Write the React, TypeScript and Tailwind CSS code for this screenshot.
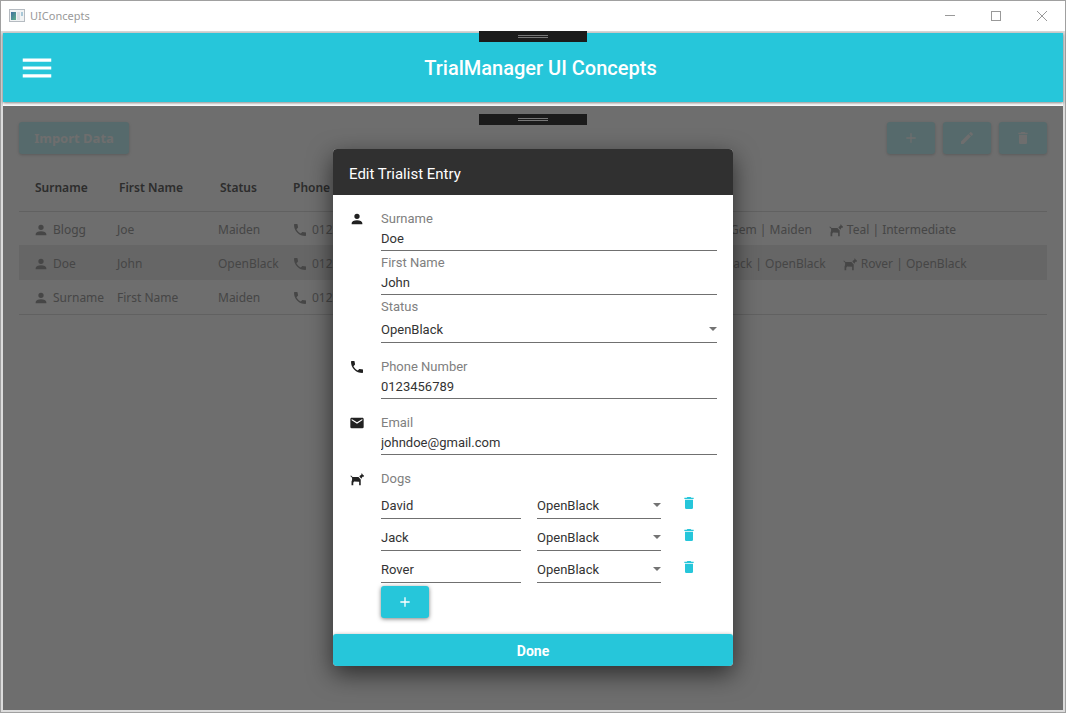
import type { ReactNode } from "react";

const paths = {
  menu: "M3,6H21V8H3V6M3,11H21V13H3V11M3,16H21V18H3V16Z",
  plus: "M19,13H13V19H11V13H5V11H11V5H13V11H19V13Z",
  pencil:
    "M20.71,7.04C21.1,6.65 21.1,6 20.71,5.63L18.37,3.29C18,2.9 17.35,2.9 16.96,3.29L15.12,5.12L18.87,8.87M3,17.25V21H6.75L17.81,9.93L14.06,6.18L3,17.25Z",
  trash:
    "M19,4H15.5L14.5,3H9.5L8.5,4H5V6H19M6,19A2,2 0 0,0 8,21H16A2,2 0 0,0 18,19V7H6V19Z",
  account:
    "M12,4A4,4 0 0,1 16,8A4,4 0 0,1 12,12A4,4 0 0,1 8,8A4,4 0 0,1 12,4M12,14C16.42,14 20,15.79 20,18V20H4V18C4,15.79 7.58,14 12,14Z",
  phone:
    "M6.62,10.79C8.06,13.62 10.38,15.94 13.21,17.38L15.41,15.18C15.69,14.9 16.08,14.82 16.43,14.93C17.55,15.3 18.75,15.5 20,15.5A1,1 0 0,1 21,16.5V20A1,1 0 0,1 20,21A17,17 0 0,1 3,4A1,1 0 0,1 4,3H7.5A1,1 0 0,1 8.5,4C8.5,5.25 8.7,6.45 9.07,7.57C9.18,7.92 9.1,8.31 8.82,8.59L6.62,10.79Z",
  email:
    "M20,8L12,13L4,8V6L12,11L20,6M20,4H4C2.89,4 2,4.89 2,6V18A2,2 0 0,0 4,20H20A2,2 0 0,0 22,18V6C22,4.89 21.1,4 20,4Z",
  dog: "M2,7.4L3,6.6L5.4,9H14.2L17.6,12.6V21.4H15.2V16.2L7.6,15.6L6.4,17.6V21.4H3.8V15.6L4.6,13.6V10.2L2,7.4ZM15.8,7.4L18.4,5.6L19.2,3L20.4,5.4L22.6,7L22,8.8H20.2L18.6,11.6L15.8,8.6Z",
};

function Icon({ name, className }: { name: keyof typeof paths; className: string }) {
  return (
    <svg viewBox="0 0 24 24" className={className} fill="currentColor" aria-hidden="true">
      <path d={paths[name]} />
    </svg>
  );
}

function Grip() {
  return (
    <div className="absolute top-0 left-1/2 flex h-[11px] w-[108px] -translate-x-1/2 flex-col items-center justify-center gap-px bg-[#1b1b1b]">
      <span className="h-px w-[30px] bg-[#777]" />
      <span className="h-px w-[30px] bg-[#777]" />
    </div>
  );
}

function TextField({ id, label, value }: { id: string; label: string; value: string }) {
  return (
    <div>
      <label htmlFor={id} className="block h-4 text-[13px] leading-4 text-[#808080]">
        {label}
      </label>
      <input
        id={id}
        defaultValue={value}
        className="block h-6 w-full border-b border-[#707070] bg-transparent text-[13px] text-[#333] outline-none"
      />
    </div>
  );
}

function StatusSelect({ id, label }: { id: string; label?: string }) {
  return (
    <div className="grid items-center">
      <select
        id={id}
        aria-label={label}
        defaultValue="OpenBlack"
        className="col-start-1 row-start-1 h-7 w-full appearance-none border-b border-[#707070] bg-transparent pt-[2px] text-[13px] text-[#333] outline-none"
      >
        <option>Maiden</option>
        <option>Intermediate</option>
        <option>OpenBlack</option>
      </select>
      <svg
        viewBox="0 0 8 4"
        className="pointer-events-none col-start-1 row-start-1 h-1 w-2 justify-self-end"
        fill="#737373"
        aria-hidden="true"
      >
        <path d="M0,0H8L4,4Z" />
      </svg>
    </div>
  );
}

function Section({ icon, children }: { icon: keyof typeof paths; children: ReactNode }) {
  return (
    <section className="flex gap-4">
      <Icon name={icon} className="size-4 shrink-0 text-[#212121]" />
      <div className="flex min-w-0 flex-1 flex-col gap-1">{children}</div>
    </section>
  );
}

const trialists = [
  { surname: "Blogg", first: "Joe", status: "Maiden", dogs: ["Gem | Maiden", "Teal | Intermediate"] },
  { surname: "Doe", first: "John", status: "OpenBlack", dogs: ["Jack | OpenBlack", "Rover | OpenBlack"] },
  { surname: "Surname", first: "First Name", status: "Maiden", dogs: [] },
];

const toolButton =
  "flex h-8 w-12 items-center justify-center rounded-[3px] bg-[#c3f1f5] text-[#fafafa] shadow-[0_1px_3px_rgba(0,0,0,0.18)]";

export default function App() {
  return (
    <div className="flex h-screen min-h-[640px] flex-col border border-[#a0a0a0] bg-white font-['Roboto',sans-serif]">
      <div className="flex h-[30px] shrink-0 items-center bg-white text-[#999]">
        <svg viewBox="0 0 16 14" className="ml-2 h-[14px] w-4" aria-hidden="true">
          <defs>
            <linearGradient id="pane" x1="0" y1="0" x2="1" y2="1">
              <stop offset="0" stopColor="#3f6f9f" />
              <stop offset="1" stopColor="#5fb08a" />
            </linearGradient>
          </defs>
          <rect x="0.5" y="0.5" width="15" height="12" fill="#f1f3f4" stroke="#b5bbc1" />
          <rect x="2" y="3" width="5" height="8" fill="url(#pane)" />
          <rect x="8" y="3" width="3" height="8" fill="#dde0e4" />
          <rect x="12" y="3" width="2" height="4" fill="#a9c8d8" />
        </svg>
        <span className="ml-[5px] flex-1 font-['Noto_Sans',sans-serif] text-[11px]">UIConcepts</span>
        <button aria-label="Minimize" className="flex h-full w-[46px] items-center justify-center">
          <svg viewBox="0 0 10 10" className="size-[10px]" aria-hidden="true">
            <path d="M0,4.5H10" stroke="currentColor" />
          </svg>
        </button>
        <button aria-label="Maximize" className="flex h-full w-[46px] items-center justify-center">
          <svg viewBox="0 0 10 10" className="size-[10px]" aria-hidden="true">
            <rect x="0.5" y="0.5" width="9" height="9" fill="none" stroke="currentColor" />
          </svg>
        </button>
        <button aria-label="Close" className="flex h-full w-[46px] items-center justify-center">
          <svg viewBox="0 0 10 10" className="size-[10px]" aria-hidden="true">
            <path d="M0,0L10,10M10,0L0,10" stroke="currentColor" />
          </svg>
        </button>
      </div>

      <div className="relative flex min-h-0 flex-1 flex-col bg-[#dcdcdc] p-[2px]">
        <Grip />
        <div className="shrink-0 bg-white pb-1">
          <header className="flex h-[69px] items-center bg-[#26c6da] pl-[15px] text-white shadow-[0_1px_3px_rgba(0,0,0,0.5)]">
            <button aria-label="Menu" className="w-0">
              <Icon name="menu" className="size-[38px]" />
            </button>
            <h1 className="flex-1 text-center text-xl font-medium">TrialManager UI Concepts</h1>
          </header>
        </div>

        <div className="relative min-h-0 flex-1 overflow-hidden bg-[#fafafa]">
          <div className="p-4 font-['Noto_Sans',sans-serif]">
            <div className="flex items-center gap-2">
              <button className="mr-auto h-8 w-[110px] rounded-[3px] bg-[#c3f1f5] pt-[2px] text-[13px] font-bold text-[#fafafa] shadow-[0_1px_3px_rgba(0,0,0,0.18)]">
                Import Data
              </button>
              <button aria-label="Add trialist" className={toolButton}>
                <Icon name="plus" className="size-4" />
              </button>
              <button aria-label="Edit trialist" className={toolButton}>
                <Icon name="pencil" className="size-4" />
              </button>
              <button aria-label="Delete trialist" className={toolButton}>
                <Icon name="trash" className="size-4" />
              </button>
            </div>

            <table className="mt-[7px] w-full table-fixed text-left text-xs whitespace-nowrap text-[#a0a0a0]">
              <colgroup>
                <col className="w-[98px]" />
                <col className="w-[101px]" />
                <col className="w-[74px]" />
                <col className="w-[419px]" />
                <col />
              </colgroup>
              <thead>
                <tr className="h-[50px] border-b border-[#dcdcdc] text-[#666]">
                  <th className="pt-1 pl-4 font-semibold">Surname</th>
                  <th className="pt-1 pl-[2px] font-semibold">First Name</th>
                  <th className="pt-1 pl-[2px] font-semibold">Status</th>
                  <th className="pt-1 pl-px font-semibold">Phone</th>
                  <th aria-label="Dogs" />
                </tr>
              </thead>
              <tbody>
                {trialists.map((t, i) => (
                  <tr
                    key={t.surname}
                    className={
                      i === 1
                        ? "h-[35px] bg-[#e8e8e8]"
                        : i === 2
                          ? "h-[34px] border-b border-[#dcdcdc]"
                          : "h-[34px]"
                    }
                  >
                    <td className="pt-[3px] pl-[14px]">
                      <span className="flex items-center gap-1">
                        <Icon name="account" className="size-4" />
                        {t.surname}
                      </span>
                    </td>
                    <td className="pt-[3px]">{t.first}</td>
                    <td className="pt-[3px]">{t.status}</td>
                    <td className="pt-[3px]">
                      <span className="flex items-center gap-1">
                        <Icon name="phone" className="size-4" />
                        0123456789
                      </span>
                    </td>
                    <td className="pt-[3px]">
                      <span className="flex items-center gap-4">
                        {t.dogs.map((d) => (
                          <span key={d} className="flex items-center gap-[3px]">
                            <Icon name="dog" className="size-4" />
                            {d}
                          </span>
                        ))}
                      </span>
                    </td>
                  </tr>
                ))}
              </tbody>
            </table>
          </div>

          <div className="absolute inset-0 flex items-center justify-center bg-black/56 pb-px">
            <div
              role="dialog"
              aria-label="Edit Trialist Entry"
              className="w-full max-w-[400px] overflow-hidden rounded-[4px] bg-white shadow-[0_8px_24px_rgba(0,0,0,0.6)]"
            >
              <h2 className="flex h-[46px] items-center bg-[#303030] px-4 pt-[5px] text-[15px] text-white">
                Edit Trialist Entry
              </h2>
              <form className="flex flex-col gap-4 p-4" onSubmit={(e) => e.preventDefault()}>
                <Section icon="account">
                  <TextField id="surname" label="Surname" value="Doe" />
                  <TextField id="first" label="First Name" value="John" />
                  <div>
                    <label htmlFor="status" className="block h-4 text-[13px] leading-4 text-[#808080]">
                      Status
                    </label>
                    <StatusSelect id="status" />
                  </div>
                </Section>
                <Section icon="phone">
                  <TextField id="phone" label="Phone Number" value="0123456789" />
                </Section>
                <Section icon="email">
                  <TextField id="email" label="Email" value="johndoe@gmail.com" />
                </Section>
                <Section icon="dog">
                  <div>
                    <h3 className="h-4 text-[13px] leading-4 text-[#808080]">Dogs</h3>
                    {["David", "Jack", "Rover"].map((dog) => (
                      <div key={dog} className="flex h-8 items-end">
                        <input
                          aria-label="Dog name"
                          defaultValue={dog}
                          className="mr-4 h-[26px] w-[140px] border-b border-[#707070] bg-transparent text-[13px] text-[#333] outline-none"
                        />
                        <div className="w-[124px]">
                          <StatusSelect id={"status-" + dog} label={dog + " status"} />
                        </div>
                        <button
                          type="button"
                          aria-label={"Delete " + dog}
                          className="flex h-8 flex-1 items-center justify-center text-[#26c6da]"
                        >
                          <Icon name="trash" className="size-4" />
                        </button>
                      </div>
                    ))}
                    <button
                      type="button"
                      aria-label="Add dog"
                      className="mt-[3px] flex h-8 w-12 items-center justify-center rounded-[3px] bg-[#26c6da] text-white shadow-[0_1px_4px_rgba(0,0,0,0.5)]"
                    >
                      <Icon name="plus" className="size-4" />
                    </button>
                  </div>
                </Section>
              </form>
              <button className="block h-8 w-full rounded-[3px] bg-[#26c6da] pt-[2px] text-sm font-bold text-white shadow-[0_1px_4px_rgba(0,0,0,0.4)]">
                Done
              </button>
            </div>
          </div>
          <div className="absolute inset-x-0 top-2">
            <Grip />
          </div>
        </div>
      </div>
    </div>
  );
}
